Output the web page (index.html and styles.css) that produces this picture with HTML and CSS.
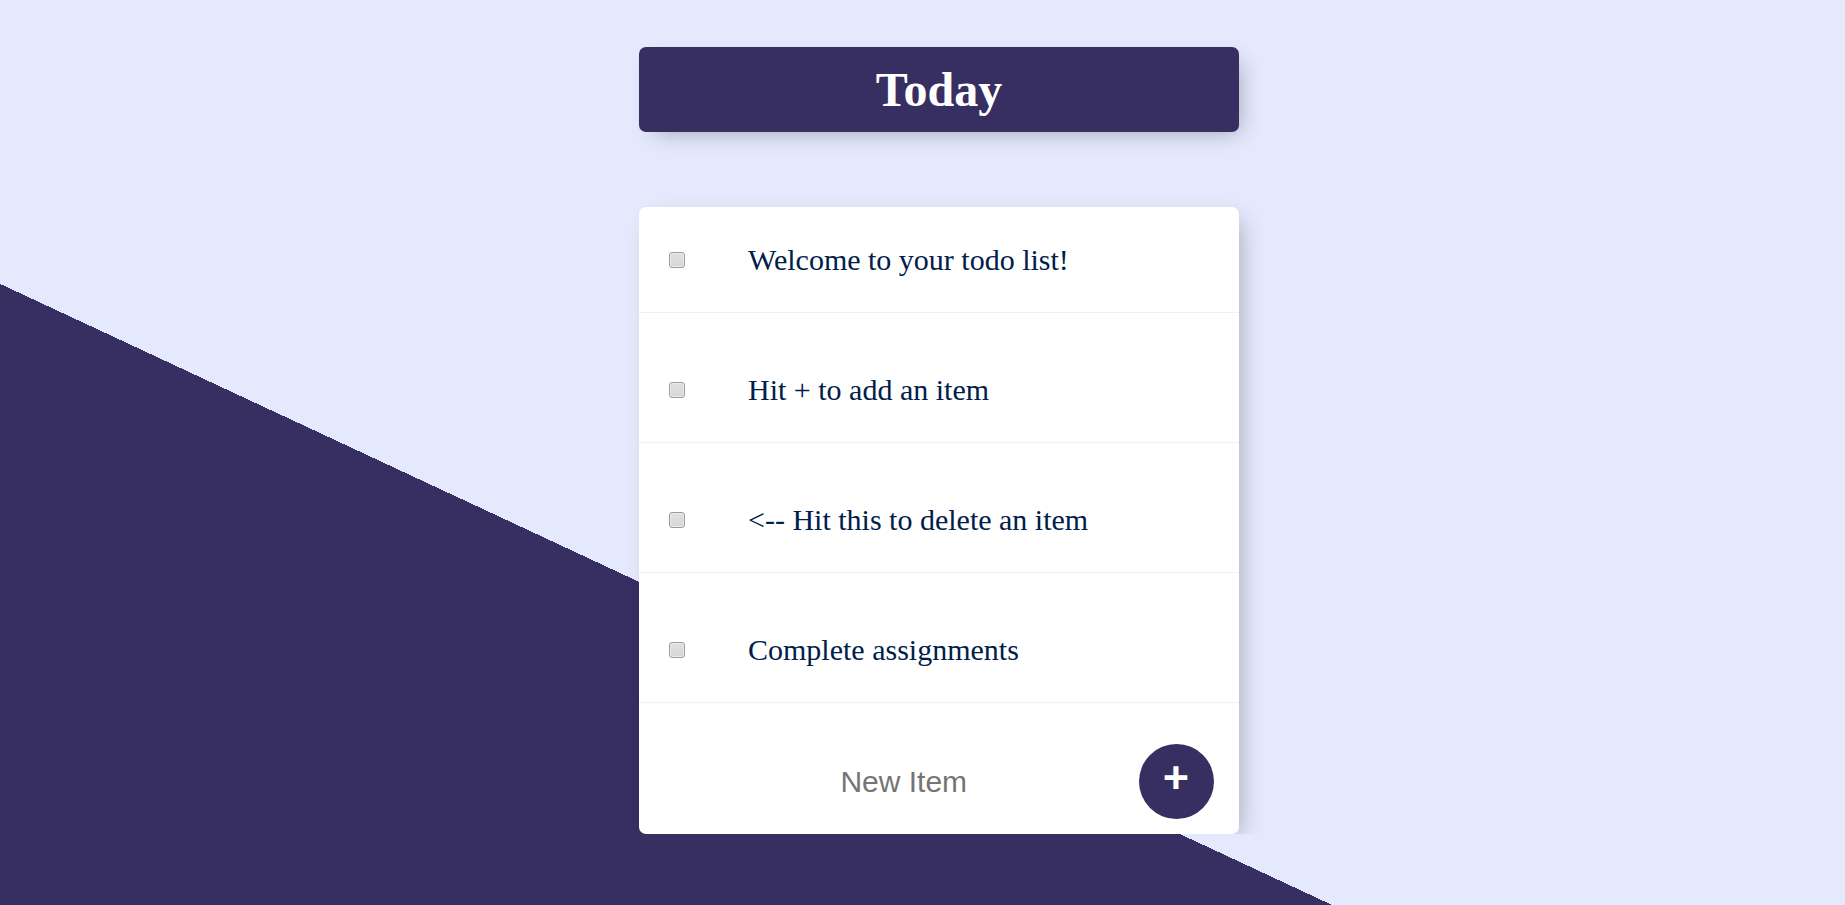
FILE: index.html
```html
<!DOCTYPE html>
<html lang="en">
<head>
<meta charset="utf-8">
<title>To-Do List</title>
<link rel="stylesheet" href="styles.css">
</head>
<body>
  <div class="box heading">
    <h1>Today</h1>
  </div>
  <div class="box list">
    <div class="item">
      <input type="checkbox" class="check">
      <p>Welcome to your todo list!</p>
    </div>
    <div class="item">
      <input type="checkbox" class="check">
      <p>Hit + to add an item</p>
    </div>
    <div class="item">
      <input type="checkbox" class="check">
      <p>&lt;-- Hit this to delete an item</p>
    </div>
    <div class="item">
      <input type="checkbox" class="check">
      <p>Complete assignments</p>
    </div>
    <form class="item new-item">
      <input type="text" class="new-text" name="newItem" placeholder="New Item" autocomplete="off">
      <button type="button" class="add-btn">+</button>
    </form>
  </div>
</body>
</html>
```

FILE: styles.css
```css
html {
  height: 100%;
  background-color: #E4E9FD;
  background-image: linear-gradient(25deg, #372e62 50%, #E4E9FD 50%);
  background-size: 100% 1428px;
  background-repeat: no-repeat;
  background-position: 0 0;
  font-family: "Liberation Sans", Arial, sans-serif;
}

body {
  margin: 0;
  padding: 47px 0 0 33px;
}

.box {
  width: 600px;
  margin: 0 auto;
  background: #fff;
  border-radius: 7px;
  box-shadow: 7.5px 7.5px 22.5px -7.5px rgba(0, 0, 0, 0.3);
}

.heading {
  background-color: #372e62;
  text-align: center;
}

.heading h1 {
  margin: 0;
  padding: 15px;
  color: #fff;
  font-family: "Liberation Serif", "Times New Roman", serif;
  font-size: 48px;
  font-weight: bold;
  line-height: 55px;
}

.list {
  margin-top: 75px;
}

.item {
  min-height: 105px;
  display: flex;
  align-items: center;
  border-bottom: 1px solid #F1F1F1;
  box-sizing: content-box;
}

.item + .item {
  padding-top: 24px;
}

.item.new-item {
  padding-top: 26px;
}

.item:last-child {
  border-bottom: 0;
}

.check {
  -webkit-appearance: none;
  appearance: none;
  width: 16px;
  height: 16px;
  margin: 0 33px 0 30px;
  box-sizing: border-box;
  border: 1px solid #9c9c9c;
  border-radius: 3px;
  background: linear-gradient(#e0e0e0, #d6d6d6);
  box-shadow: inset 0 0 0 1px #ebebeb;
  flex: none;
}

.item p {
  margin: 0;
  padding: 30px;
  font-family: "Liberation Serif", "Times New Roman", serif;
  font-size: 30px;
  font-weight: normal;
  color: #00204a;
}

.new-item {
  margin: 0 0 0 30px;
}

.new-text {
  width: 469.5px;
  height: 90px;
  padding: 0;
  border: none;
  background: transparent;
  text-align: center;
  font-family: "Liberation Sans", Arial, sans-serif;
  font-size: 30px;
  color: #00204a;
  outline: none;
}

.new-text::placeholder {
  color: #757575;
}

.add-btn {
  width: 75px;
  height: 75px;
  padding: 0 0 9px 0;
  border: 0;
  border-radius: 50%;
  background-color: #372e62;
  color: #fff;
  font-family: "Liberation Sans", Arial, sans-serif;
  font-size: 45px;
  font-weight: bold;
  line-height: 1;
  flex: none;
}
```
